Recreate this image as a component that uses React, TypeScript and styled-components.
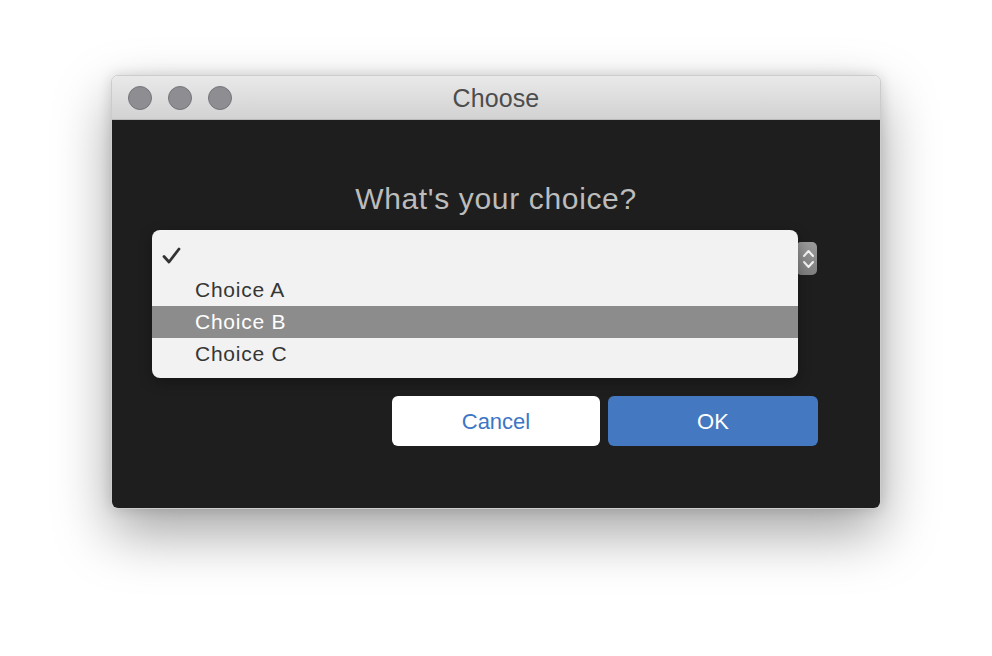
import React from "react"
import styled, { createGlobalStyle } from "styled-components"

const GlobalStyle = createGlobalStyle`
  html, body {
    margin: 0;
    padding: 0;
    background: #ffffff;
    font-family: "Liberation Sans", Arial, sans-serif;
  }
`

const Page = styled.div`
  width: 992px;
  height: 656px;
  box-sizing: border-box;
  padding: 75px 0 0 111px;
  background: #ffffff;
`

const Window = styled.div`
  width: 770px;
  height: 434px;
  box-sizing: border-box;
  display: flex;
  flex-direction: column;
  border-radius: 7px;
  overflow: hidden;
  border: 1px solid rgba(0, 0, 0, 0.2);
  box-shadow: 0 24px 56px rgba(0, 0, 0, 0.36), 0 0 14px rgba(0, 0, 0, 0.14);
`

const TitleBar = styled.div`
  height: 43px;
  flex-shrink: 0;
  display: grid;
  grid-template-columns: 1fr auto 1fr;
  align-items: center;
  background: linear-gradient(#e9e9e9, #d2d2d2);
  border-bottom: 1px solid #b9b9b9;
`

const Lights = styled.div`
  display: flex;
  gap: 16px;
  padding-left: 16px;
`

const Light = styled.div`
  width: 24px;
  height: 24px;
  border-radius: 50%;
  background: #8e8d92;
  border: 1px solid #76757a;
  box-sizing: border-box;
`

const Title = styled.div`
  font-size: 25px;
  color: #4d4d4d;
  letter-spacing: 0.1px;
  padding-top: 2px;
`

const Body = styled.div`
  flex: 1;
  background: #1e1e1e;
  display: flex;
  flex-direction: column;
  padding: 61px 63px 0 40px;
`

const Heading = styled.div`
  font-size: 30px;
  line-height: 36px;
  color: #bcbcbc;
  text-align: center;
  letter-spacing: 0.65px;
  margin-left: 23px;
`

const SelectRow = styled.div`
  position: relative;
  height: 33px;
  margin-top: 25px;
  display: flex;
  justify-content: flex-end;
`

const Stepper = styled.div`
  width: 21px;
  height: 33px;
  border-radius: 5px;
  background: linear-gradient(#9a9a9a, #7e7e7e);
  display: flex;
  align-items: center;
  justify-content: flex-end;
  padding-right: 2px;
  box-sizing: border-box;
`

const Popup = styled.div`
  position: absolute;
  left: 0;
  top: -12px;
  width: 646px;
  box-sizing: border-box;
  padding: 12px 0 8px;
  background: #f2f2f2;
  border-radius: 8px;
  box-shadow: 0 4px 14px rgba(0, 0, 0, 0.3);
  z-index: 2;
`

const Item = styled.div<{ selected?: boolean }>`
  height: 32px;
  display: flex;
  align-items: center;
  padding-left: 10px;
  gap: 14px;
  font-size: 21px;
  letter-spacing: 0.75px;
  color: ${({ selected }) => (selected ? "#ffffff" : "#363636")};
  background: ${({ selected }) => (selected ? "#8c8c8c" : "transparent")};
`

const CheckSlot = styled.div`
  width: 19px;
  display: flex;
  align-items: center;
  margin-top: -6px;
`

const Buttons = styled.div`
  display: flex;
  justify-content: flex-end;
  gap: 8px;
  margin-top: 121px;
  margin-right: -1px;
`

const Button = styled.div<{ primary?: boolean }>`
  width: ${({ primary }) => (primary ? "210px" : "208px")};
  height: 50px;
  border-radius: 6px;
  display: flex;
  align-items: center;
  justify-content: center;
  padding-top: 2px;
  box-sizing: border-box;
  font-size: 22px;
  background: ${({ primary }) => (primary ? "#4478c0" : "#ffffff")};
  color: ${({ primary }) => (primary ? "#ffffff" : "#3c76c4")};
`

const Check = () => (
  <svg width="19" height="17" viewBox="0 0 19 17">
    <path d="M2 9.5 L7 15 L17 2" fill="none" stroke="#333333" strokeWidth="2.8" strokeLinecap="round" strokeLinejoin="round" />
  </svg>
)

const Chevrons = () => (
  <svg width="13" height="26" viewBox="0 0 13 26">
    <path d="M2 10 L6.5 5 L11 10" fill="none" stroke="#f4f4f4" strokeWidth="2" strokeLinecap="round" strokeLinejoin="round" />
    <path d="M2 16 L6.5 21 L11 16" fill="none" stroke="#f4f4f4" strokeWidth="2" strokeLinecap="round" strokeLinejoin="round" />
  </svg>
)

export default function App() {
  const choices = ["Choice A", "Choice B", "Choice C"]
  const selected = "Choice B"
  return (
    <>
      <GlobalStyle />
      <Page>
        <Window>
          <TitleBar>
            <Lights>
              <Light />
              <Light />
              <Light />
            </Lights>
            <Title>Choose</Title>
            <div />
          </TitleBar>
          <Body>
            <Heading>What's your choice?</Heading>
            <SelectRow>
              <Stepper>
                <Chevrons />
              </Stepper>
              <Popup>
                <Item>
                  <CheckSlot>
                    <Check />
                  </CheckSlot>
                </Item>
                {choices.map((c) => (
                  <Item key={c} selected={c === selected}>
                    <CheckSlot />
                    {c}
                  </Item>
                ))}
              </Popup>
            </SelectRow>
            <Buttons>
              <Button>Cancel</Button>
              <Button primary>OK</Button>
            </Buttons>
          </Body>
        </Window>
      </Page>
    </>
  )
}
